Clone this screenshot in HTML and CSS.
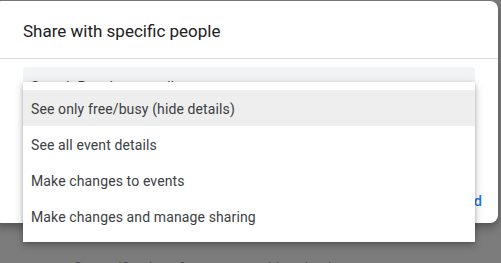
FILE: index.html
```html
<!DOCTYPE html>
<html>
<head>
<meta charset="utf-8">
<link rel="stylesheet" href="styles.css">
</head>
<body>
<div class="dialog">
  <div class="dialog-header">Share with specific people</div>
  <div class="dialog-body">
    <div class="field">Search People or email</div>
    <div class="menu">
      <div class="menu-item active">See only free/busy (hide details)</div>
      <div class="menu-item">See all event details</div>
      <div class="menu-item">Make changes to events</div>
      <div class="menu-item">Make changes and manage sharing</div>
    </div>
  </div>
  <div class="dialog-footer">
    <span class="btn">Send</span>
  </div>
</div>
<div class="behind">Get notifications for events on this calendar</div>
</body>
</html>
```

FILE: styles.css
```css
html, body {
  margin: 0;
  padding: 0;
}
body {
  width: 501px;
  height: 263px;
  overflow: hidden;
  background: #7c7c7c;
  font-family: Roboto, "Liberation Sans", sans-serif;
}
.dialog {
  margin: 1px 0 0 -6px;
  width: 504px;
  height: 222px;
  background: #fff;
  border-radius: 8px;
  box-shadow: 0 4px 10px rgba(0,0,0,0.35);
  display: flex;
  flex-direction: column;
  position: relative;
}
.dialog-header {
  height: 58px;
  box-sizing: border-box;
  padding: 19px 0 0 29px;
  font-size: 17px;
  line-height: 22px;
  color: #202124;
  border-bottom: 1px solid #dadce0;
}
.dialog-body {
  padding: 8px 23px 0 29px;
  position: relative;
}
.field {
  height: 36px;
  box-sizing: border-box;
  background: #f1f3f4;
  border-radius: 4px 4px 0 0;
  padding: 10px 0 0 8px;
  font-size: 14px;
  line-height: 20px;
  color: #3c4043;
}
.menu {
  position: absolute;
  left: 29px;
  top: 23px;
  width: 452px;
  background: #fff;
  padding: 8px 0;
  box-shadow: 0 3px 8px rgba(0,0,0,0.28), 0 1px 3px rgba(0,0,0,0.15);
  z-index: 2;
}
.menu-item {
  height: 36px;
  box-sizing: border-box;
  display: flex;
  align-items: center;
  padding: 2px 0 0 8px;
  font-size: 14px;
  color: #3c4043;
  letter-spacing: 0.12px;
}
.menu-item.active {
  background: #eeeeee;
}
.dialog-footer {
  margin-top: auto;
  display: flex;
  justify-content: flex-end;
  padding: 0 16px 12px 0;
}
.btn {
  font-size: 14px;
  font-weight: 500;
  color: #1a73e8;
  line-height: 20px;
}
.behind {
  margin: 35px 0 0 73px;
  font-size: 14px;
  color: #4a4a4a;
  line-height: 20px;
}
```
